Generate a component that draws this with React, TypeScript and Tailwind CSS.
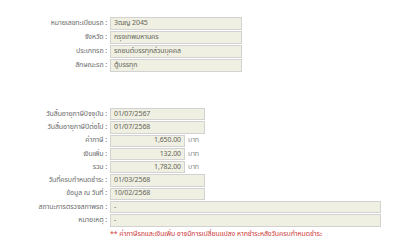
import React from "react";

type Row = {
  label: string;
  value: string;
  kind?: "text" | "money" | "wide";
  height?: string;
};

const plate: Row[] = [
  { label: "หมายเลขทะเบียนรถ", value: "3ฒญ 2045" },
  { label: "จังหวัด", value: "กรุงเทพมหานคร" },
  { label: "ประเภทรถ", value: "รถยนต์บรรทุกส่วนบุคคล" },
  { label: "ลักษณะรถ", value: "ตู้บรรทุก" },
];

const tax: Row[] = [
  { label: "วันสิ้นอายุภาษีปัจจุบัน", value: "01/07/2567" },
  { label: "วันสิ้นอายุภาษีปีต่อไป", value: "01/07/2568" },
  { label: "ค่าภาษี", value: "1,650.00", kind: "money" },
  { label: "เงินเพิ่ม", value: "132.00", kind: "money" },
  { label: "รวม", value: "1,782.00", kind: "money" },
  { label: "วันที่ครบกำหนดชำระ", value: "01/03/2568" },
  { label: "ข้อมูล ณ วันที่", value: "10/02/2568" },
  { label: "สถานะการตรวจสภาพรถ", value: "-", kind: "wide" },
  { label: "หมายเหตุ", value: "-", kind: "wide" },
];

function Field({ row, box }: { row: Row; box: string }) {
  const kind = row.kind ?? "text";
  let width = box;
  if (kind === "money") width = "w-[75px]";
  if (kind === "wide") width = "w-[271px]";

  return (
    <div className="flex items-center">
      <div className="w-[107px] shrink-0 text-right text-[#6b6b6b] whitespace-nowrap">
        {row.label} :
      </div>
      <div
        className={`ml-[3px] ${width} ${row.height ?? "h-[13px]"} flex items-center border border-[#d2d2d2] bg-[#efefe2] px-[3px] text-[#66665a] ${
          kind === "money" ? "justify-end" : ""
        }`}
      >
        {row.value}
      </div>
      {kind === "money" && (
        <span className="ml-[3px] text-[#8a8a8a]">บาท</span>
      )}
    </div>
  );
}

export default function App() {
  return (
    <div
      className="w-[400px] h-[250px] bg-white text-[7px] leading-none tracking-[-0.1px] overflow-hidden"
      style={{
        fontFamily:
          '"Noto Sans Thai", "Noto Sans Thai UI", "DejaVu Sans", "Noto Sans", sans-serif',
      }}
    >
      {/* vehicle info */}
      <div className="pt-[17px] flex flex-col gap-[1px]">
        {plate.map((r) => (
          <Field key={r.label} row={r} box="w-[132px]" />
        ))}
      </div>

      {/* tax info */}
      <div className="mt-[36px] flex flex-col gap-[1px]">
        {tax.map((r) => (
          <Field
            key={r.label}
            row={{ ...r, height: "h-[12.3px]" }}
            box="w-[95px]"
          />
        ))}
      </div>

      <div className="ml-[110px] mt-[4px] text-[#cc3b3b] whitespace-nowrap">
        ** ค่าภาษีรถและเงินเพิ่ม อาจมีการเปลี่ยนแปลง หากชำระหลังวันครบกำหนดชำระ
      </div>
    </div>
  );
}
